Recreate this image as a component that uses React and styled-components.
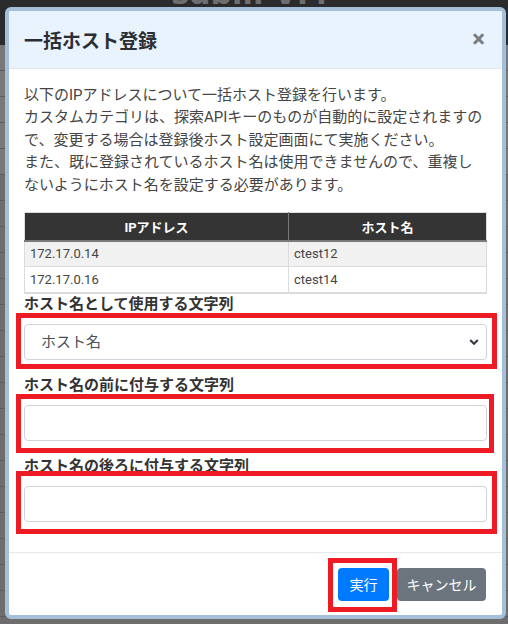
import React from "react";
import styled, { createGlobalStyle } from "styled-components";

const Global = createGlobalStyle`
  html, body { margin: 0; padding: 0; }
  body {
    width: 508px; height: 624px; overflow: hidden;
    background: #6c6c6c;
    font-family: Roboto, "Noto Sans CJK JP", sans-serif;
  }
  * { box-sizing: border-box; }
`;

const Page = styled.div`
  height: 624px;
  display: flex;
  flex-direction: column;
  background: #6d6d6d;
`;

const TopBar = styled.div`
  height: 45px;
  background: #2b2b2d;
  display: flex;
  justify-content: center;
  overflow: hidden;
`;

const SiteTitle = styled.div`
  margin-top: -24px;
  margin-left: -10px;
  font-size: 30px;
  font-weight: 700;
  color: #6e6e6e;
  font-family: "DejaVu Sans", sans-serif;
`;

const BgRow = styled.div`
  height: 26px;
  border-bottom: 1px solid #5d5d5d;
  background: ${(p) => p.$bg || "#6d6d6d"};
`;

const Overlay = styled.div`
  position: fixed;
  inset: 0;
  padding: 7px 3px 5px 5px;
`;

const Modal = styled.div`
  width: 501px;
  height: 612px;
  border: 4px solid #a4bfd8;
  border-radius: 6px;
  background: #fff;
  display: flex;
  flex-direction: column;
  overflow: hidden;
`;

const Header = styled.div`
  height: 58px;
  flex: none;
  background: #e8f3fd;
  border-bottom: 1px solid #dfe5ea;
  display: flex;
  align-items: center;
  justify-content: space-between;
  padding: 0 15px;
`;

const Title = styled.h5`
  margin: 0;
  font-size: 19px;
  font-weight: 700;
  color: #2b2f33;
`;

const Close = styled.span`
  font-size: 24px;
  font-weight: 700;
  color: #7b7d80;
  line-height: 1;
  margin-right: 2px;
  margin-top: -2px;
`;

const Body = styled.div`
  padding: 15px;
  flex: none;
`;

const Intro = styled.p`
  margin: 0 2px 16px 0;
  font-size: 15px;
  line-height: 22.4px;
  color: #454545;
`;

const Table = styled.table`
  width: 100%;
  border-collapse: collapse;
  border: 1px solid #dcdcdc;
  border-bottom: 2px solid #dcdcdc;
  font-size: 13px;
`;

const Th = styled.th`
  height: 28px;
  background: #343434;
  color: #fff;
  font-weight: 700;
  text-align: center;
  padding: 0;
  border-bottom: 2px solid #7a7a7a;
  border-left: ${(p) => (p.$first ? "none" : "1px solid #7a7a7a")};
  width: ${(p) => p.$w || "auto"};
`;

const Tr = styled.tr`
  background: ${(p) => (p.$alt ? "#f1f1f1" : "#fff")};
`;

const Td = styled.td`
  height: 26px;
  padding: 0 0 0 5px;
  color: #444;
  border-top: 1px solid #dcdcdc;
  border-left: ${(p) => (p.$first ? "none" : "1px solid #dcdcdc")};
`;

const Group = styled.div`
  display: flex;
  flex-direction: column;
  margin-bottom: 15px;
`;

const Label = styled.label`
  font-size: 15px;
  font-weight: 700;
  line-height: 20px;
  color: #333;
  margin-bottom: 10px;
`;

const Marked = styled.div`
  position: relative;
  &::after {
    content: "";
    position: absolute;
    top: ${(p) => p.$t}px;
    left: ${(p) => p.$l}px;
    right: ${(p) => p.$r}px;
    bottom: ${(p) => p.$b}px;
    border: 5px solid #ed1c24;
    pointer-events: none;
  }
`;

const Select = styled.select`
  appearance: none;
  width: 100%;
  height: 36px;
  border: 1px solid #ced4da;
  border-radius: 4px;
  background: #fff;
  padding: 0 16px;
  font-family: inherit;
  font-size: 15px;
  color: #495057;
`;

const Chevron = styled.svg`
  position: absolute;
  right: 8px;
  top: 13px;
  width: 10px;
  height: 10px;
  pointer-events: none;
`;

const Input = styled.input`
  width: 100%;
  height: 36px;
  border: 1px solid #ced4da;
  border-radius: 4px;
  background: #fff;
  padding: 0 12px;
  font-size: 15px;
`;

const Footer = styled.div`
  border-top: 1px solid #e6e9ec;
  padding: 15px 16px 14px 15px;
  display: flex;
  justify-content: flex-end;
  gap: 8px;
`;

const Button = styled.button`
  height: 33px;
  width: ${(p) => p.$w}px;
  border: none;
  border-radius: 4px;
  background: ${(p) => p.$bg};
  color: #fff;
  font-family: inherit;
  font-size: 14px;
  padding: 0;
`;

const rows = [
  ["172.17.0.14", "ctest12"],
  ["172.17.0.16", "ctest14"],
];

export default function App() {
  return (
    <>
      <Global />
      <Page>
        <TopBar>
          <SiteTitle>sdbm VM</SiteTitle>
        </TopBar>
        {Array.from({ length: 22 }).map((_, i) => (
          <BgRow key={i} $bg={i < 5 ? "#787878" : "#6d6d6d"} />
        ))}
      </Page>
      <Overlay>
        <Modal>
          <Header>
            <Title>一括ホスト登録</Title>
            <Close>×</Close>
          </Header>
          <Body>
            <Intro>
              以下のIPアドレスについて一括ホスト登録を行います。
              <br />
              カスタムカテゴリは、探索APIキーのものが自動的に設定されますので、変更する場合は登録後ホスト設定画面にて実施ください。
              <br />
              また、既に登録されているホスト名は使用できませんので、重複しないようにホスト名を設定する必要があります。
            </Intro>
            <Table>
              <thead>
                <tr>
                  <Th $first $w="264px">IPアドレス</Th>
                  <Th>ホスト名</Th>
                </tr>
              </thead>
              <tbody>
                {rows.map((r, i) => (
                  <Tr key={r[0]} $alt={i % 2 === 0}>
                    <Td $first>{r[0]}</Td>
                    <Td>{r[1]}</Td>
                  </Tr>
                ))}
              </tbody>
            </Table>
            <Group>
              <Label>ホスト名として使用する文字列</Label>
              <Marked $t={-11} $l={-8} $r={-10} $b={-9}>
                <Select defaultValue="host">
                  <option value="host">ホスト名</option>
                </Select>
                <Chevron viewBox="0 0 10 10">
                  <path d="M1.2 3 L5 6.8 L8.8 3" fill="none" stroke="#343a40" strokeWidth="2" />
                </Chevron>
              </Marked>
            </Group>
            <Group>
              <Label>ホスト名の前に付与する文字列</Label>
              <Marked $t={-11} $l={-8} $r={-7} $b={-12}>
                <Input />
              </Marked>
            </Group>
            <Group>
              <Label>ホスト名の後ろに付与する文字列</Label>
              <Marked $t={-15} $l={-8} $r={-10} $b={-12}>
                <Input />
              </Marked>
            </Group>
          </Body>
          <Footer>
            <Marked $t={-10} $l={-10} $r={-8} $b={-11}>
              <Button $w={51} $bg="#007bff">実行</Button>
            </Marked>
            <Button $w={89} $bg="#6c757d">キャンセル</Button>
          </Footer>
        </Modal>
      </Overlay>
    </>
  );
}
